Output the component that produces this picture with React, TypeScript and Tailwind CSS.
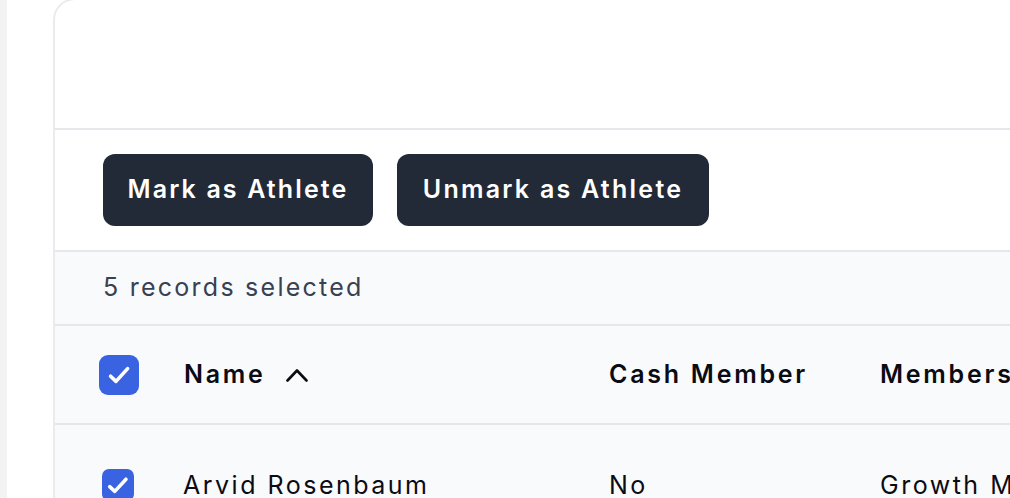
import React from "react";

function Check({ size, d, sw }: { size: number; d: string; sw: number }) {
  return (
    <svg width={size} height={size} viewBox="0 0 20 20" fill="none">
      <path d={d} stroke="white" strokeWidth={sw} strokeLinecap="round" strokeLinejoin="round" />
    </svg>
  );
}

export default function App() {
  const font = { fontFamily: "Inter, 'Noto Sans', sans-serif" };
  return (
    <div className="flex h-[498px] w-[1010px] overflow-hidden bg-white" style={font}>
      <div className="w-[7px] shrink-0 bg-[#f3f3f4]" />
      <div className="ml-[46px] -mt-[2px] flex-1 rounded-tl-[22px] border-l-2 border-t-2 border-[#ebebed]">
        <div className="h-[130px] border-b-2 border-[#e5e7eb]" />
        <div className="flex gap-[24px] border-b-2 border-[#e5e7eb] py-[24px] pl-[48px]">
          <button className="flex h-[72px] w-[270px] items-center justify-center rounded-[12px] bg-[#222937] text-[25px] font-semibold tracking-[0.085em] text-white">
            Mark as Athlete
          </button>
          <button className="flex h-[72px] w-[312px] items-center justify-center rounded-[12px] bg-[#222937] text-[25px] font-semibold tracking-[0.09em] text-white">
            Unmark as Athlete
          </button>
        </div>
        <div className="flex h-[74px] items-center border-b-2 border-[#e5e7eb] bg-[#f9fafb] pl-[48px] text-[25px] tracking-[0.09em] text-[#374151]">
          5 records selected
        </div>
        <div className="flex h-[99px] items-center border-b-2 border-[#e5e7eb] bg-[#f9fafb] pl-[24px] text-[25px] font-semibold tracking-[0.11em] text-[#0b0b14]">
          <div className="flex w-[80px] justify-center">
            <div className="h-[40px] w-[40px] rounded-[9px] bg-[#3a63e2]">
              <Check size={40} d="M5.8 10.6l2.7 2.6 5.8-6.4" sw={1.8} />
            </div>
          </div>
          <div className="flex w-[450px] items-center gap-[20px] pl-[25px]">
            <span>Name</span>
            <svg width="22" height="14" viewBox="0 0 22 14" fill="none">
              <path d="M1.5 12.5L11 2.5l9.5 10" stroke="#0b0b14" strokeWidth="2.6" strokeLinecap="round" strokeLinejoin="round" />
            </svg>
          </div>
          <div className="w-[271px]">Cash Member</div>
          <div className="whitespace-nowrap">Membership</div>
        </div>
        <div className="flex h-[100px] items-start bg-[#f9fafb] pl-[23px] pt-[44px] text-[25px] tracking-[0.1em] text-[#0b0b14]">
          <div className="flex w-[80px] justify-center">
            <div className="h-[32px] w-[32px] rounded-[7px] bg-[#3a63e2]">
              <Check size={32} d="M4.8 11l3.2 3 7-7.6" sw={2.2} />
            </div>
          </div>
          <div className="w-[451px] pl-[25px] leading-[32px]">Arvid Rosenbaum</div>
          <div className="w-[271px] leading-[32px]">No</div>
          <div className="whitespace-nowrap leading-[32px]">Growth Member</div>
        </div>
      </div>
    </div>
  );
}
